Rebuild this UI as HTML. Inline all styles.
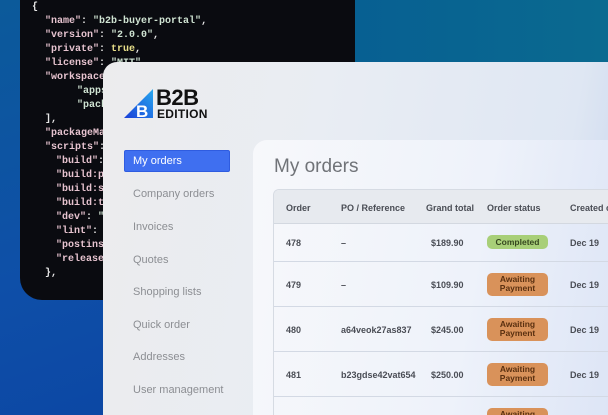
<!DOCTYPE html>
<html><head><style>
*{margin:0;padding:0;box-sizing:border-box}
html,body{width:608px;height:415px;overflow:hidden}
body{position:relative;font-family:"Liberation Sans",sans-serif;
background:linear-gradient(160deg,#0c5a9a 0%,#0e4fa8 45%,#0a3fa0 100%)}
.bgtr{position:absolute;left:340px;top:0;width:268px;height:70px;background:linear-gradient(90deg,#075f92,#0a6a90)}
.code{position:absolute;left:20px;top:0;width:335px;height:300px;background:#0a0b10;border-radius:0 0 0 22px;overflow:hidden;
font-family:"Liberation Mono",monospace;font-size:10px;color:#e8e8e8;font-weight:bold}
.code div{position:absolute;white-space:pre}
.k{color:#e6c3cf}.s{color:#cfe3d2}.y{color:#e9e08a}
.main{position:absolute;left:103px;top:62px;width:505px;height:353px;border-radius:14px 0 0 0;overflow:hidden;
background:linear-gradient(100deg,#ececed 0%,#e9edf3 40%,#dfe7f3 85%,#c9d6ee 100%)}
.nav{position:absolute;left:30px;font-size:11px;color:#8c8e93}
.active{position:absolute;left:21px;top:88px;width:106px;height:22px;background:#3f6ff0;border:1px solid #2f5ce0;border-radius:2px;color:#fff;font-size:11px;padding:4px 8px}
.card{position:absolute;left:150px;top:78px;width:355px;height:275px;border-radius:14px 0 0 0;overflow:hidden;
background:linear-gradient(100deg,#f7f8fb 0%,#eef2fa 60%,#dde5f6 100%)}
.title{position:absolute;left:21px;top:16px;font-size:19px;color:#707378}
.tbl{position:absolute;left:20px;top:49px;width:335px;height:226px;border:1px solid #d6dbe3;border-right:0;border-bottom:0;border-radius:6px 0 0 0;overflow:hidden}
.hd{position:absolute;left:0;top:0;width:100%;height:34px;background:#e7eaef;border-bottom:1px solid #d3d8e0}
.row{position:absolute;left:0;width:100%;border-bottom:1px solid #d3d9e4}
.c{position:absolute;font-size:9px;color:#4a4d55;white-space:nowrap;font-weight:bold}
.b{position:absolute;left:213px;width:61px;border-radius:5px;font-size:8.5px;text-align:center;line-height:9px;font-weight:bold}
.g{background:#a8cf78;color:#36471f;height:14px;line-height:14px}
.o{background:#d9925a;color:#5a3010;height:23px;padding-top:2px}
</style></head><body>
<div class="bgtr"></div>
<div class="code">
<div style="left:12px;top:2px">{</div>
<div style="left:25px;top:16px"><span class="k">"name"</span>: <span class="s">"b2b-buyer-portal"</span>,</div>
<div style="left:25px;top:30px"><span class="k">"version"</span>: <span class="s">"2.0.0"</span>,</div>
<div style="left:25px;top:44px"><span class="k">"private"</span>: <span class="y">true</span>,</div>
<div style="left:25px;top:58px"><span class="k">"license"</span>: <span class="s">"MIT"</span>,</div>
<div style="left:25px;top:72px"><span class="k">"workspaces"</span>: [</div>
<div style="left:57px;top:86px"><span class="s">"apps/*"</span>,</div>
<div style="left:57px;top:100px"><span class="s">"packages/*"</span></div>
<div style="left:25px;top:114px">],</div>
<div style="left:25px;top:128px"><span class="k">"packageManager"</span>:</div>
<div style="left:25px;top:142px"><span class="k">"scripts"</span>: {</div>
<div style="left:36px;top:156px"><span class="k">"build"</span>: </div>
<div style="left:36px;top:170px"><span class="k">"build:prod"</span></div>
<div style="left:36px;top:184px"><span class="k">"build:stage"</span></div>
<div style="left:36px;top:198px"><span class="k">"build:tier"</span></div>
<div style="left:36px;top:212px"><span class="k">"dev"</span>: <span class="s">"turbo"</span></div>
<div style="left:36px;top:226px"><span class="k">"lint"</span>: <span class="s">"turbo"</span></div>
<div style="left:36px;top:240px"><span class="k">"postinstall"</span></div>
<div style="left:36px;top:254px"><span class="k">"release"</span></div>
<div style="left:25px;top:268px">},</div>
</div>
<div class="main">
<svg style="position:absolute;left:21px;top:24px" width="95" height="34" viewBox="0 0 95 34">
<defs><linearGradient id="lg" x1="0" y1="1" x2="1" y2="0"><stop offset="0" stop-color="#1a3fd8"/><stop offset="1" stop-color="#27a8ee"/></linearGradient></defs>
<polygon points="0,32 29,3 29,32" fill="url(#lg)"/>
<text x="12" y="31" font-family="Liberation Sans" font-weight="bold" font-size="17" fill="#fff">B</text>
<text x="32" y="19" font-family="Liberation Sans" font-weight="bold" font-size="22" fill="#111" letter-spacing="-0.5">B2B</text>
<text x="33" y="32" font-family="Liberation Sans" font-weight="bold" font-size="12" fill="#111" letter-spacing="0.3">EDITION</text>
</svg>
<div class="active">My orders</div>
<div class="nav" style="top:126px">Company orders</div>
<div class="nav" style="top:159px">Invoices</div>
<div class="nav" style="top:192px">Quotes</div>
<div class="nav" style="top:224px">Shopping lists</div>
<div class="nav" style="top:257px">Quick order</div>
<div class="nav" style="top:289px">Addresses</div>
<div class="nav" style="top:322px">User management</div>
<div class="card">
<div class="title">My orders</div>
<div class="tbl">
<div class="hd">
<div class="c" style="left:12px;top:13px">Order</div>
<div class="c" style="left:67px;top:13px">PO / Reference</div>
<div class="c" style="left:152px;top:13px">Grand total</div>
<div class="c" style="left:213px;top:13px">Order status</div>
<div class="c" style="left:296px;top:13px">Created on</div>
</div>
<div class="row" style="top:34px;height:38px">
<div class="c" style="left:12px;top:14px">478</div><div class="c" style="left:67px;top:14px">–</div>
<div class="c" style="left:157px;top:14px">$189.90</div><div class="b g" style="top:11px">Completed</div><div class="c" style="left:296px;top:14px">Dec 19</div></div>
<div class="row" style="top:72px;height:45px">
<div class="c" style="left:12px;top:18px">479</div><div class="c" style="left:67px;top:18px">–</div>
<div class="c" style="left:157px;top:18px">$109.90</div><div class="b o" style="top:11px">Awaiting<br>Payment</div><div class="c" style="left:296px;top:18px">Dec 19</div></div>
<div class="row" style="top:117px;height:45px">
<div class="c" style="left:12px;top:18px">480</div><div class="c" style="left:67px;top:18px">a64veok27as837</div>
<div class="c" style="left:157px;top:18px">$245.00</div><div class="b o" style="top:11px">Awaiting<br>Payment</div><div class="c" style="left:296px;top:18px">Dec 19</div></div>
<div class="row" style="top:162px;height:45px">
<div class="c" style="left:12px;top:18px">481</div><div class="c" style="left:67px;top:18px">b23gdse42vat654</div>
<div class="c" style="left:157px;top:18px">$250.00</div><div class="b o" style="top:11px">Awaiting<br>Payment</div><div class="c" style="left:296px;top:18px">Dec 19</div></div>
<div class="row" style="top:207px;height:19px;border:0">
<div class="b o" style="top:11px">Awaiting<br>Payment</div></div>
</div>
</div>
</div>
</body></html>
